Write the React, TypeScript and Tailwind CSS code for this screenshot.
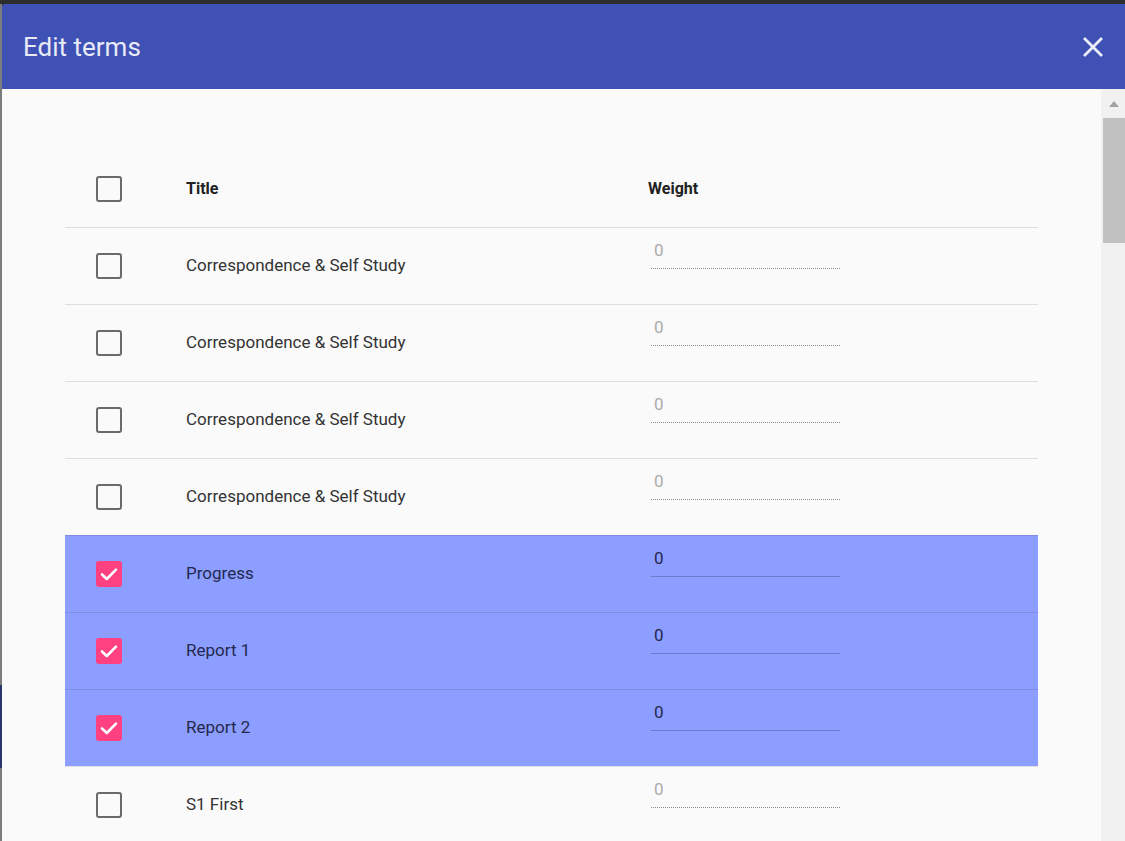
import React from "react";

type Row = { title: string; checked: boolean };

const rows: Row[] = [
  { title: "Correspondence & Self Study", checked: false },
  { title: "Correspondence & Self Study", checked: false },
  { title: "Correspondence & Self Study", checked: false },
  { title: "Correspondence & Self Study", checked: false },
  { title: "Progress", checked: true },
  { title: "Report 1", checked: true },
  { title: "Report 2", checked: true },
  { title: "S1 First", checked: false },
];

function Box({ checked }: { checked: boolean }) {
  if (checked) {
    return (
      <div className="w-[26px] h-[26px] rounded-[3px] bg-[#ff4081] flex items-center justify-center">
        <svg width="22" height="22" viewBox="0 0 22 22">
          <path d="M4 11.5 L8.8 16 L18 6.6" fill="none" stroke="#ffffff" strokeWidth="2.6" strokeLinecap="round" strokeLinejoin="round" />
        </svg>
      </div>
    );
  }
  return <div className="w-[26px] h-[26px] rounded-[3px] border-[2.5px] border-[#6a6a6a]" />;
}

export default function App() {
  return (
    <div className="w-[1125px] h-[841px] overflow-hidden bg-[#2e2e2e] flex flex-col" style={{ fontFamily: "Roboto, 'Noto Sans', sans-serif" }}>
      <div className="h-[4px] shrink-0" />
      <div className="flex flex-1 min-h-0">
        <div className="w-[2px] shrink-0 flex flex-col bg-[#7c7c7c]">
          <div className="h-[681px]" />
          <div className="h-[83px] bg-[#2b3468]" />
        </div>
        <div className="flex-1 flex flex-col rounded-tl-[3px] overflow-hidden">
          <div className="h-[85px] shrink-0 bg-[#3f51b5] flex items-center justify-between pl-[21px] pr-[22px]">
            <span className="text-[26px] text-[#e8eaf6] leading-none">Edit terms</span>
            <svg width="20" height="20" viewBox="0 0 20 20">
              <path d="M2 2 L18 18 M18 2 L2 18" stroke="#eceef8" strokeWidth="2.8" strokeLinecap="square" />
            </svg>
          </div>
          <div className="flex flex-1 min-h-0 bg-[#fafafa]">
            <div className="flex-1 pt-[61px] pl-[63px] pr-[63px]">
              <div className="w-[973px]">
                <div className="h-[77px] flex items-center">
                  <div className="w-[121px] pl-[31px] shrink-0"><Box checked={false} /></div>
                  <div className="w-[462px] shrink-0 text-[16px] font-bold text-[#212121]">Title</div>
                  <div className="text-[16px] font-bold text-[#212121]">Weight</div>
                </div>
                {rows.map((r, i) => (
                  <div
                    key={i}
                    className={
                      r.checked
                        ? "h-[77px] flex items-center border-t border-[#7d8ce0] bg-[#8c9eff]"
                        : "h-[77px] flex items-center border-t border-[#dedede]"
                    }
                  >
                    <div className="w-[121px] pl-[31px] shrink-0"><Box checked={r.checked} /></div>
                    <div className={r.checked ? "w-[465px] shrink-0 text-[17px] text-[#24284f]" : "w-[465px] shrink-0 text-[17px] text-[#333333]"}>{r.title}</div>
                    <div className="w-[189px] self-start mt-[13px]">
                      <div className={r.checked ? "px-[3px] h-[27px] text-[17px] leading-[19px] text-[#24284f]" : "px-[3px] h-[27px] text-[17px] leading-[19px] text-[#ababab]"}>0</div>
                      <div className={r.checked ? "h-0 border-t border-[#6d7bc9]" : "h-0 border-t border-dotted border-[#8a8a8a]"} />
                    </div>
                  </div>
                ))}
              </div>
            </div>
            <div className="w-[24px] shrink-0 bg-[#f1f1f1] flex flex-col items-end">
              <div className="h-[29px] w-full flex items-center justify-center pl-[2px]">
                <svg width="12" height="8" viewBox="0 0 12 8"><path d="M6 1 L11 7 L1 7 Z" fill="#a3a3a3" /></svg>
              </div>
              <div className="w-[22px] h-[125px] bg-[#c1c1c1]" />
            </div>
          </div>
        </div>
      </div>
    </div>
  );
}
